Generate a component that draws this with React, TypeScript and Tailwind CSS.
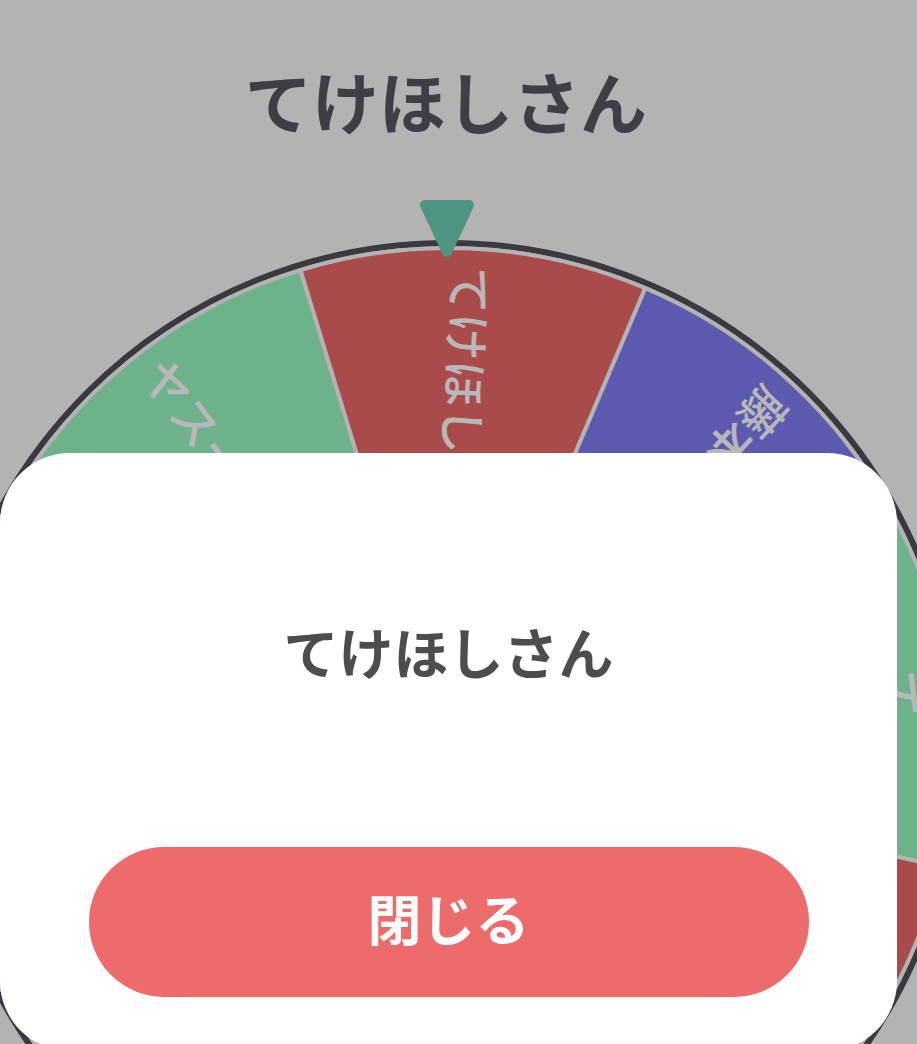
import React from "react";

const CX = 520;
const CY = 520;
const SEG_R = 505;
const RING_R = 510;

type Seg = { color: string; label: string };

const segs: Seg[] = [
  { color: "#a84b4a", label: "てけほしさん" },
  { color: "#5b5aaf", label: "藤本さん" },
  { color: "#6eb28b", label: "トモさん" },
  { color: "#a84b4a", label: "はるかさん" },
  { color: "#5b5aaf", label: "みさきさん" },
  { color: "#6eb28b", label: "ゆうたさん" },
  { color: "#a84b4a", label: "さとしさん" },
  { color: "#5b5aaf", label: "けんじさん" },
  { color: "#6eb28b", label: "ヤスーさん" },
];

const START = -17;
const STEP = 40;

function pt(angleDeg: number, r: number) {
  const a = (angleDeg * Math.PI) / 180;
  return [CX + r * Math.sin(a), CY - r * Math.cos(a)];
}

function Wheel() {
  return (
    <svg
      width={1040}
      height={1040}
      viewBox="0 0 1040 1040"
      className="shrink-0 ml-[-72px] block"
    >
      <circle cx={CX} cy={CY} r={RING_R} fill="#b3b3b3" stroke="#3a3940" strokeWidth={6} />
      {segs.map((s, i) => {
        const a0 = START + i * STEP;
        const a1 = a0 + STEP;
        const [x0, y0] = pt(a0, SEG_R);
        const [x1, y1] = pt(a1, SEG_R);
        return (
          <path
            key={"p" + i}
            d={`M ${CX} ${CY} L ${x0} ${y0} A ${SEG_R} ${SEG_R} 0 0 1 ${x1} ${y1} Z`}
            fill={s.color}
            stroke="#b3b3b3"
            strokeWidth={4}
            strokeLinejoin="round"
          />
        );
      })}
      {segs.map((s, i) => {
        const mid = START + i * STEP + STEP / 2;
        return (
          <g key={"t" + i} transform={`translate(${CX} ${CY}) rotate(${mid + 90})`}>
            <text
              x={-487}
              y={0}
              dominantBaseline="central"
              textAnchor="start"
              fill="#b8b8b8"
              fontSize={47}
              fontWeight={500}
              style={{ fontFamily: '"Noto Sans CJK JP", "Noto Sans", sans-serif' }}
            >
              {s.label}
            </text>
          </g>
        );
      })}
    </svg>
  );
}

function Pointer() {
  return (
    <svg
      width={66}
      height={70}
      viewBox="414 195 66 70"
      className="absolute left-[414px] top-[195px]"
    >
      <path
        d="M 425 205 L 469 205 L 447 252 Z"
        fill="#4d9582"
        stroke="#4d9582"
        strokeWidth={10}
        strokeLinejoin="round"
      />
    </svg>
  );
}

export default function App() {
  return (
    <div
      className="relative w-[917px] h-[1044px] overflow-hidden bg-[#b3b3b3]"
      style={{ fontFamily: '"Noto Sans CJK JP", "Noto Sans", sans-serif' }}
    >
      <div className="h-[198px] flex items-center justify-center">
        <h1 className="text-[67px] font-bold text-[#3f3e46] leading-none mr-[25px]">
          てけほしさん
        </h1>
      </div>
      <div className="mt-[35px] flex">
        <Wheel />
      </div>
      <Pointer />
      <div className="absolute left-0 top-[453px] w-[897px] h-[598px] rounded-[70px] bg-white flex flex-col items-center">
        <div className="h-[394px] w-full flex items-center justify-center">
          <p className="text-[55px] font-bold text-[#4d4d4d] leading-none">てけほしさん</p>
        </div>
        <button className="w-[720px] h-[150px] rounded-full bg-[#ed6c6b] text-white text-[54px] font-bold leading-none flex items-center justify-center pb-[8px]">
          閉じる
        </button>
      </div>
    </div>
  );
}
